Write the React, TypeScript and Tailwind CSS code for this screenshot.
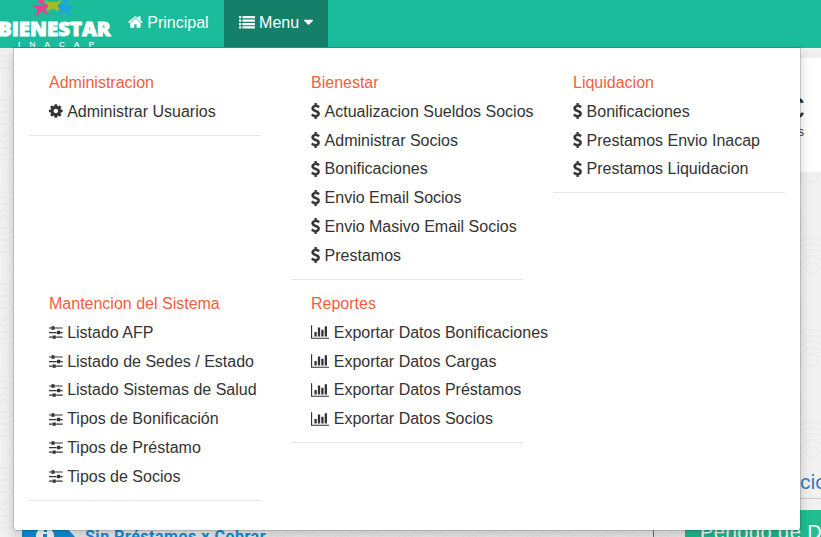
import type { ReactNode } from "react";

type IconProps = { width: number; viewBox: string; children: ReactNode };

function Glyph({ width, viewBox, children }: IconProps) {
  return (
    <svg width={width} height={16} viewBox={viewBox} fill="currentColor" className="mb-[2px] mr-[4.45px] shrink-0">
      {children}
    </svg>
  );
}

const Gear = () => (
  <Glyph width={13.71} viewBox="0 0 1536 1792">
    <path d="M1024 896q0-106-75-181t-181-75-181 75-75 181 75 181 181 75 181-75 75-181zm512-109v222q0 12-8 23t-20 13l-185 28q-19 54-39 91 35 50 107 138 10 12 10 25t-9 23q-27 37-99 108t-94 71q-12 0-26-9l-138-108q-44 23-91 38-16 136-29 186-7 28-36 28H657q-14 0-24.500-8.500T621 1634l-28-184q-49-16-90-37l-141 107q-10 9-25 9-14 0-25-11-126-114-165-168-7-10-7-23 0-12 8-23 15-21 51-66.500t54-70.500q-27-50-41-99l-183-27q-13-2-21-12.500T0 1005V783q0-12 8-23t19-13l186-28q14-46 39-92-40-57-107-138-10-12-10-24 0-10 9-23 26-36 98.500-107.500T337 263q13 0 26 10l138 107q44-23 91-38 16-136 29-186 7-28 36-28h222q14 0 24.500 8.500T915 158l28 184q49 16 90 37l142-107q9-9 24-9 13 0 25 10 129 119 165 170 7 8 7 22 0 12-8 23-15 21-51 66.500t-54 70.500q26 50 41 98l183 28q13 2 21 12.500t8 23.500z" />
  </Glyph>
);

const Dollar = () => (
  <Glyph width={9.14} viewBox="0 0 1024 1792">
    <path
      stroke="currentColor"
      strokeWidth={50}
      d="M978 1185q0 153-99.500 263.500T620 1585v175q0 14-9 23t-23 9H453q-13 0-22.500-9.500T421 1760v-175q-66-9-127.500-31T192 1509.500t-74-48-46.500-37.500-17.500-18q-17-21-2-41l103-135q7-10 23-12 15-2 24 9l2 2q113 99 243 125 37 8 74 8 81 0 142.500-43t61.500-122q0-28-15-53t-33.500-42-58.500-37.500-66-32-80-32.500q-39-16-61.500-25T349 948.500t-62.500-31T230 882t-53.500-42.500-43.500-49-35.500-58-21-66.500-8.500-78q0-138 98-242t255-134V32q0-13 9.500-22.500T453 0h135q14 0 23 9t9 23v176q57 6 110.500 23t87 33.500T881 302t39 29 15 14q17 18 5 38l-81 146q-8 15-23 16-14 3-27-7-3-3-14.500-12t-39-26.500-58.500-32-74.500-26T537 429q-95 0-155 43t-60 111q0 26 8.500 48t29.500 41.500 39.500 33 56 31 60.500 27 70 27.500q53 20 81 31.500t76 35 75.500 42.500 62 50 53 63.500 31.500 76.500 13 94z"
    />
  </Glyph>
);

const Sliders = () => (
  <Glyph width={13.71} viewBox="0 0 1536 1792">
    <path d="M352 1408v128H0v-128h352zM704 1280q26 0 45 19t19 45v256q0 26-19 45t-45 19H448q-26 0-45-19t-19-45v-256q0-26 19-45t45-19h256zM864 896v128H0V896h864zM224 384v128H0V384h224zM1536 1408v128H800v-128h736zM576 256q26 0 45 19t19 45v256q0 26-19 45t-45 19H320q-26 0-45-19t-19-45V320q0-26 19-45t45-19h256zM1216 768q26 0 45 19t19 45v256q0 26-19 45t-45 19H960q-26 0-45-19t-19-45V832q0-26 19-45t45-19h256zM1536 896v128h-224V896h224zM1536 384v128H672V384h864z" />
  </Glyph>
);

const Bars = () => (
  <Glyph width={18.29} viewBox="0 0 2048 1792">
    <path d="M640 896v512H384V896h256zM1024 384v1024H768V384h256zM2048 1536v128H0V128h128v1408h1920zM1408 640v768h-256V640h256zM1792 256v1152h-256V256h256z" />
  </Glyph>
);

const Home = () => (
  <Glyph width={14.86} viewBox="0 0 1664 1792">
    <path d="M1408 992v480q0 26-19 45t-45 19H960v-384H704v384H320q-26 0-45-19t-19-45V992q0-1 .5-3t.5-3l575-474 575 474q1 2 1 6zm223-69l-62 74q-8 9-21 11h-3q-13 0-21-7L832 424 140 1001q-12 8-24 7-13-2-21-11l-62-74q-8-10-7-23.500T37 878L756 279q32-26 76-26t76 26l244 204V288q0-14 9-23t23-9h192q14 0 23 9t9 23v408l219 182q10 8 11 21.500t-7 23.500z" />
  </Glyph>
);

const List = () => (
  <Glyph width={16} viewBox="0 0 1792 1792">
    {[256, 640, 1024, 1408].map((y) => (
      <g key={y}>
        <rect x={0} y={y - 30} width={256} height={256} rx={32} />
        <rect x={384} y={y - 30} width={1408} height={256} rx={32} />
      </g>
    ))}
  </Glyph>
);

const Caret = () => (
  <svg width={9.14} height={16} viewBox="0 0 1024 1792" fill="currentColor" className="mb-[2px] ml-[4.45px]">
    <path d="M1024 704q0 26-19 45l-448 448q-19 19-45 19t-45-19L19 749Q0 730 0 704t19-45 45-19h896q26 0 45 19t19 45z" />
  </svg>
);

function Logo() {
  return (
    <svg width={112} height={48} viewBox="0 0 112 48" className="shrink-0">
      <g fill="#e8408f">
        <circle cx={41} cy={1} r={2.8} />
        <path d="M31 5 L39 5.500 L50 3 L45.500 9 L49 15.500 L42 11.500 L35 17 L37.500 9.500 Z" />
      </g>
      <g fill="#1fa3dc">
        <circle cx={65} cy={1} r={2.8} />
        <path d="M74.500 5 L67 5.500 L56 3 L60.500 9 L57 15.500 L64 11.500 L72 17 L68.500 9.500 Z" />
      </g>
      <path fill="#a5bd1e" d="M43.500 0 L50 2 L56 2 L62.500 0 L57.500 5.500 L59.500 12 L53 8.500 L46 12 L48.500 5.500 Z" />
      <text x={-2} y={36} textLength={112.5} lengthAdjust="spacingAndGlyphs" fill="#fff" stroke="#fff" strokeWidth={0.9} className="font-['Open_Sans',sans-serif] text-[19px] font-extrabold">
        BIENESTAR
      </text>
      <text x={18} y={47} textLength={76} fill="#f2fffb" stroke="#f2fffb" strokeWidth={0.2} className="font-['Liberation_Sans',sans-serif] text-[8px]">
        INACAP
      </text>
    </svg>
  );
}

type Section = { title: string; Icon: () => ReactNode; items: string[] };

const sections: Section[] = [
  { title: "Administracion", Icon: Gear, items: ["Administrar Usuarios"] },
  {
    title: "Bienestar",
    Icon: Dollar,
    items: ["Actualizacion Sueldos Socios", "Administrar Socios", "Bonificaciones", "Envio Email Socios", "Envio Masivo Email Socios", "Prestamos"],
  },
  { title: "Liquidacion", Icon: Dollar, items: ["Bonificaciones", "Prestamos Envio Inacap", "Prestamos Liquidacion"] },
  {
    title: "Mantencion del Sistema",
    Icon: Sliders,
    items: ["Listado AFP", "Listado de Sedes / Estado", "Listado Sistemas de Salud", "Tipos de Bonificación", "Tipos de Préstamo", "Tipos de Socios"],
  },
  {
    title: "Reportes",
    Icon: Bars,
    items: ["Exportar Datos Bonificaciones", "Exportar Datos Cargas", "Exportar Datos Préstamos", "Exportar Datos Socios"],
  },
];

function MegaMenu() {
  return (
    <div className="absolute left-[13px] top-[47px] z-10 h-[484px] w-[788px] rounded-b border border-black/15 bg-white bg-clip-padding pt-[20.2px] shadow-[0_6px_12px_rgba(0,0,0,0.175)]">
      <div className="grid grid-cols-3 gap-y-[0.4px]">
        {sections.map(({ title, Icon, items }) => (
          <ul key={title} className="px-[15px] pt-[0.8px] text-[16px] leading-[28.8px] text-[#333]">
            <li className="px-5 text-[#f05f40]">{title}</li>
            {items.map((item) => (
              <li key={item} className="flex items-center whitespace-nowrap px-5">
                <Icon />
                {item}
              </li>
            ))}
            <li className="mb-[9px] mt-[8.2px] h-px bg-[#e5e5e5]" />
          </ul>
        ))}
      </div>
    </div>
  );
}

function Pattern() {
  return (
    <svg className="absolute inset-0" width={821} height={537}>
      <defs>
        <pattern id="rings" width={64} height={92} patternUnits="userSpaceOnUse">
          <g fill="none" stroke="#ececec" strokeWidth={1.5}>
            {[6, 12, 18, 24, 30].map((r) => (
              <circle key={r} cx={4} cy={38} r={r} />
            ))}
            {[6, 12, 18, 24, 30].map((r) => (
              <circle key={r} cx={44} cy={84} r={r} />
            ))}
          </g>
        </pattern>
      </defs>
      <rect width={821} height={537} fill="url(#rings)" />
    </svg>
  );
}

export default function App() {
  return (
    <div className="relative h-[537px] w-[821px] overflow-hidden bg-[#f1f1f1] font-['Liberation_Sans',Arial,sans-serif]">
      <Pattern />
      <div className="relative flex h-full flex-col">
        <nav className="flex h-12 shrink-0 bg-[#1abc9c] text-[16px] text-white">
          <Logo />
          <a className="flex h-[47px] items-center pb-[2px] pl-4 pr-[15px]">
            <Home />
            Principal
          </a>
          <a className="flex h-[47px] w-[104px] items-center bg-[#148069] pb-[2px] pl-[15px]">
            <List />
            Menu
            <Caret />
          </a>
        </nav>
        <header className="ml-[22px] mt-[10px] flex h-[114px] shrink-0 flex-col items-end bg-white pr-[17px] pt-8 text-[#333]">
          <div className="-mr-px text-[32px] leading-9">ABC</div>
          <div className="text-[12px] leading-3">Socios</div>
        </header>
        <main className="mt-[298px] flex">
          <section className="flex w-[632px] shrink-0 pl-[22px] pt-[56px]">
            <div className="flex h-8 w-[53px] justify-center bg-[#118fde] [clip-path:polygon(0_0,81%_0,100%_34%,100%_100%,0_100%)]">
              <svg width={18} height={18} viewBox="0 0 18 18" className="mr-2 mt-px">
                <circle cx={9} cy={9} r={9} fill="#fff" />
                <path d="M8 3h3v2H8zM7 7h4v7H7z" fill="#118fde" />
              </svg>
            </div>
            <b className="pl-[10px] pt-px font-[Roboto,sans-serif] text-[16px] leading-5 tracking-[0.52px] text-[#118fde]">Sin Préstamos x Cobrar</b>
          </section>
          <div className="ml-[21px] mt-[55px] h-8 w-px shrink-0 bg-[#118fde]" />
          <aside className="ml-[31px] w-[136px] shrink-0">
            <div className="flex h-[29px] border-b border-[#c8c8c8] pl-[45px] font-[Roboto,sans-serif] text-[20px] leading-6 text-[#337ab7]">
              Informacion
            </div>
            <div className="mt-[11px] h-12 overflow-hidden whitespace-nowrap bg-[#20be91] pl-[15px] pt-[10px] text-[20px] leading-6 tracking-[0.45px] text-white">
              Periodo de Descuento
            </div>
          </aside>
        </main>
      </div>
      <MegaMenu />
    </div>
  );
}
